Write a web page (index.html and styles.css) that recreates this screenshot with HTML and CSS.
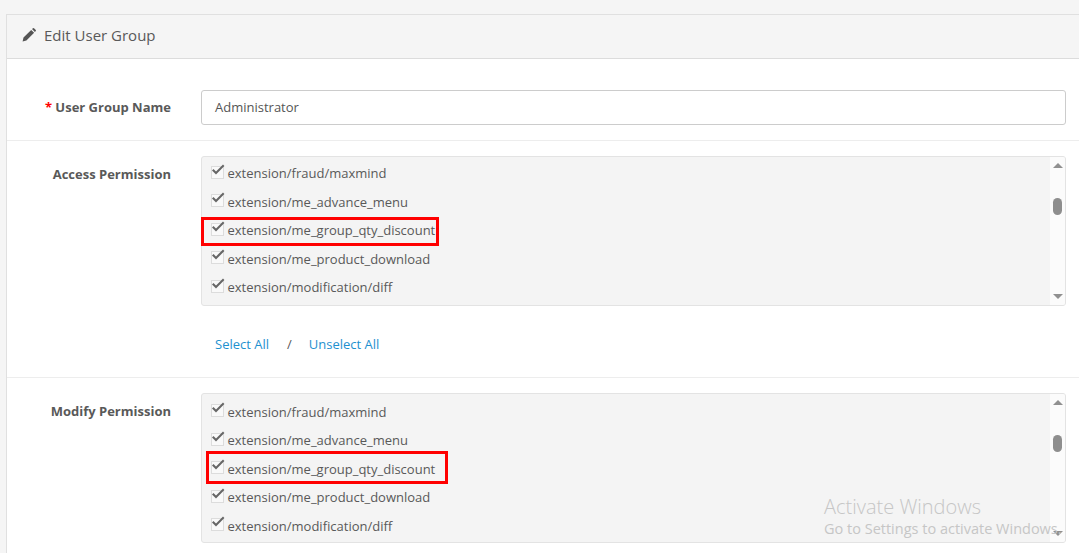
FILE: index.html
```html
<!DOCTYPE html>
<html lang="en">
<head>
<meta charset="utf-8">
<title>Edit User Group</title>
<link rel="stylesheet" href="styles.css">
</head>
<body>
<svg class="defs" width="0" height="0" aria-hidden="true">
  <symbol id="tick" viewBox="0 0 14 12"><path d="M1 6.6 2.5 5 5 7.4 12 .6 13.4 2 5 10.6Z"/></symbol>
</svg>
<main class="panel">
  <header class="panel-heading">
    <svg class="pencil" viewBox="0 0 14 14" width="14" height="14" aria-hidden="true"><path d="M.6 13.4 1.5 9.6 9.2 1.9 12.1 4.8 4.4 12.5ZM10 1.1 11 .2Q11.5-.1 12 .2L13.8 2Q14.1 2.5 13.8 3L12.9 4Z"/></svg>
    <h1 class="panel-title">Edit User Group</h1>
  </header>
  <section class="row row-name">
    <label class="row-label"><span class="req">*</span> User Group Name</label>
    <div class="row-field"><div class="text-input">Administrator</div></div>
  </section>
  <section class="row row-access">
    <div class="row-label row-label-top">Access Permission</div>
    <div class="row-field">
      <div class="well">
        <ul class="perm-list">
          <li class="perm"><span class="check"><svg><use href="#tick"/></svg></span>extension/fraud/maxmind</li>
          <li class="perm"><span class="check"><svg><use href="#tick"/></svg></span>extension/me_advance_menu</li>
          <li class="perm"><span class="check"><svg><use href="#tick"/></svg></span>extension/me_group_qty_discount</li>
          <li class="perm"><span class="check"><svg><use href="#tick"/></svg></span>extension/me_product_download</li>
          <li class="perm"><span class="check"><svg><use href="#tick"/></svg></span>extension/modification/diff</li>
        </ul>
        <div class="scrollbar"><span class="arrow-up"></span><span class="thumb"></span><span class="arrow-down"></span></div>
      </div>
      <div class="select-links"><a class="link">Select All</a><span class="sep">/</span><a class="link">Unselect All</a></div>
    </div>
    <span class="mark mark-access"></span>
  </section>
  <section class="row row-modify">
    <div class="row-label row-label-top">Modify Permission</div>
    <div class="row-field">
      <div class="well">
        <ul class="perm-list perm-list-modify">
          <li class="perm"><span class="check"><svg><use href="#tick"/></svg></span>extension/fraud/maxmind</li>
          <li class="perm"><span class="check"><svg><use href="#tick"/></svg></span>extension/me_advance_menu</li>
          <li class="perm"><span class="check"><svg><use href="#tick"/></svg></span>extension/me_group_qty_discount</li>
          <li class="perm"><span class="check"><svg><use href="#tick"/></svg></span>extension/me_product_download</li>
          <li class="perm"><span class="check"><svg><use href="#tick"/></svg></span>extension/modification/diff</li>
        </ul>
        <div class="scrollbar"><span class="arrow-up"></span><span class="thumb"></span><span class="arrow-down"></span></div>
      </div>
    </div>
    <span class="mark mark-modify"></span>
  </section>
</main>
<aside class="activate">
  <div class="activate-title">Activate Windows</div>
  <div class="activate-sub">Go to Settings to activate Windows.</div>
</aside>
</body>
</html>
```

FILE: styles.css
```css
html, body {
  margin: 0;
  height: 553px;
  overflow: hidden;
}
body {
  background: #f5f5f5;
  font-family: "Open Sans", sans-serif;
  font-size: 13px;
  color: #595959;
  padding: 14px 0 0 6px;
  box-sizing: border-box;
  position: relative;
}
.defs { position: absolute; }
.panel {
  background: #fff;
  border: 1px solid #e0e0e0;
  border-right: 0;
  border-bottom: 0;
  box-sizing: border-box;
  height: 539px;
  overflow: hidden;
}
.panel-heading {
  display: flex;
  align-items: center;
  gap: 8px;
  height: 43px;
  box-sizing: content-box;
  padding-left: 15px;
  background: #f5f5f5;
  border-bottom: 1px solid #dcdcdc;
}
.pencil { fill: #555; flex: none; margin-top: -4px; }
.panel-title {
  margin: -4px 0 0;
  font-size: 15px;
  font-weight: 400;
  color: #595959;
}
.row {
  display: flex;
  position: relative;
  border-bottom: 1px solid #ededed;
  box-sizing: border-box;
}
.row-name { height: 82px; padding-top: 31px; }
.row-access { height: 237px; padding-top: 15px; }
.row-modify { padding-top: 15px; border-bottom: 0; }
.row-label {
  width: 164px;
  flex: none;
  text-align: right;
  font-size: 13px;
  font-weight: 700;
  line-height: 34px;
  color: #595959;
}
.row-label-top { line-height: 36px; }
.req { color: #f00; }
.row-field {
  width: 865px;
  margin-left: 30px;
  flex: none;
}
.text-input {
  height: 35px;
  line-height: 33px;
  box-sizing: border-box;
  border: 1px solid #ccc;
  border-radius: 3px;
  padding-left: 13px;
  background: #fff;
  color: #555;
}
.well {
  display: flex;
  height: 150px;
  box-sizing: border-box;
  border: 1px solid #e3e3e3;
  border-radius: 3px;
  background: #f4f4f4;
  overflow: hidden;
}
.perm-list {
  list-style: none;
  margin: 0;
  padding: 2px 0 0 8px;
  flex: 1;
}
.perm-list-modify { padding-top: 3.6px; }
.perm {
  height: 28.5px;
  line-height: 28.5px;
  display: flex;
  align-items: center;
  white-space: nowrap;
}
.check {
  width: 11px;
  height: 11px;
  flex: none;
  margin: -2px 3.5px 0 1px;
  border: 1px solid #dcdcdc;
  background: #f9f9f9;
  position: relative;
}
.check svg {
  position: absolute;
  left: -1px;
  top: -3px;
  width: 14px;
  height: 12px;
  fill: #666;
}
.scrollbar {
  width: 15px;
  flex: none;
  background: #fbfbfb;
  display: flex;
  flex-direction: column;
  align-items: center;
  padding: 6px 0;
  box-sizing: border-box;
  position: relative;
}
.arrow-up {
  width: 0;
  border: 5px solid transparent;
  border-top: 0;
  border-bottom: 5px solid #909090;
}
.arrow-down {
  width: 0;
  margin-top: auto;
  border: 5px solid transparent;
  border-bottom: 0;
  border-top: 5px solid #909090;
}
.thumb {
  width: 9px;
  height: 17px;
  margin-top: 30px;
  border-radius: 4.5px;
  background: #8e8e8e;
}
.select-links {
  display: flex;
  padding-top: 29px;
  line-height: 18px;
}
.link { color: #1e91cf; padding-left: 14px; }
.sep { padding-left: 18px; padding-right: 3px; }
.mark {
  position: absolute;
  box-sizing: border-box;
  border: 3px solid #f00;
}
.mark-access { left: 194px; top: 76px; width: 238px; height: 29px; }
.mark-modify { left: 199px; top: 73px; width: 242px; height: 33px; }
.activate {
  position: absolute;
  left: 824px;
  top: 493px;
  color: #c6c6c6;
  white-space: nowrap;
}
.activate-title { font-size: 20px; font-weight: 300; line-height: 27px; }
.activate-sub { font-size: 14.5px; line-height: 18px; }
```
